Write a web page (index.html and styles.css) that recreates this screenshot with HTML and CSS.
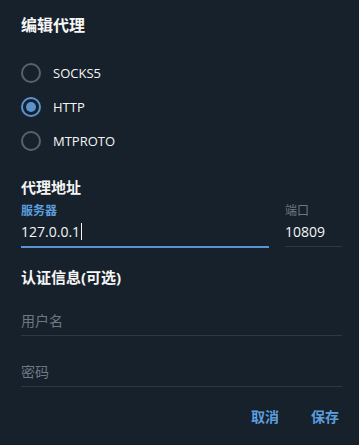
FILE: index.html
```html
<!DOCTYPE html>
<html>
<head>
  <meta charset="utf-8">
  <title>编辑代理</title>
  <link rel="stylesheet" href="styles.css">
</head>
<body>
  <div class="dialog">
    <h2 class="dialog-title">编辑代理</h2>

    <div class="radio-list">
      <label class="radio-row">
        <span class="radio"></span>
        <span class="radio-label">SOCKS5</span>
      </label>
      <label class="radio-row">
        <span class="radio checked"></span>
        <span class="radio-label">HTTP</span>
      </label>
      <label class="radio-row">
        <span class="radio"></span>
        <span class="radio-label">MTPROTO</span>
      </label>
    </div>

    <h3 class="section-title">代理地址</h3>
    <div class="address-row">
      <div class="field field-server active">
        <div class="field-label">服务器</div>
        <div class="field-input">127.0.0.1<span class="cursor"></span></div>
      </div>
      <div class="field field-port">
        <div class="field-label">端口</div>
        <div class="field-input">10809</div>
      </div>
    </div>

    <h3 class="section-title auth-title">认证信息(可选)</h3>
    <div class="field plain">
      <div class="field-input placeholder">用户名</div>
    </div>
    <div class="field plain">
      <div class="field-input placeholder">密码</div>
    </div>

    <div class="buttons">
      <span class="button">取消</span>
      <span class="button">保存</span>
    </div>
  </div>
</body>
</html>
```

FILE: styles.css
```css
body {
  margin: 0;
  background-color: #17212b;
  color: #f5f5f5;
  font-family: "Open Sans", "Noto Sans CJK SC", sans-serif;
}

.dialog {
  padding: 15px 17px 0 21px;
}

.dialog-title {
  margin: 0;
  font-size: 16px;
  line-height: 20px;
  font-weight: bold;
}

/* radio buttons */
.radio-list {
  margin-top: 21px;
}

.radio-row {
  display: flex;
  align-items: center;
  height: 34px;
}

.radio {
  box-sizing: border-box;
  width: 20px;
  height: 20px;
  border: 2px solid #56626e;
  border-radius: 50%;
  display: flex;
  align-items: center;
  justify-content: center;
}

.radio.checked {
  border-color: #5b93cf;
}

.radio.checked::after {
  content: "";
  width: 10px;
  height: 10px;
  border-radius: 50%;
  background-color: #5b93cf;
}

.radio-label {
  margin-left: 12px;
  font-size: 13px;
}

/* sections */
.section-title {
  margin: 19px 0 0;
  font-size: 15px;
  line-height: 20px;
  font-weight: bold;
}

.auth-title {
  margin-top: 19px;
}

.address-row {
  display: flex;
  gap: 16px;
  margin-top: 6px;
}

.field-server {
  flex: 1;
}

.field-port {
  width: 57px;
}

.field-label {
  font-size: 12px;
  line-height: 16px;
  color: #6d7883;
}

.active .field-label {
  color: #5b9ede;
  font-weight: bold;
}

.field-input {
  margin-top: 3px;
  font-size: 14px;
  line-height: 20px;
  padding-bottom: 4px;
  border-bottom: 1px solid #2c3843;
}

.active .field-input {
  border-bottom: 2px solid #5b93cf;
}

.cursor {
  display: inline-block;
  width: 1px;
  height: 17px;
  margin-left: 1px;
  vertical-align: -3px;
  background-color: #f5f5f5;
}

.plain {
  margin-top: 24px;
}

.plain + .plain {
  margin-top: 26px;
}

.placeholder {
  color: #6d7883;
}

/* dialog buttons */
.buttons {
  display: flex;
  justify-content: flex-end;
  gap: 32px;
  margin-top: 20px;
  padding-right: 3px;
}

.button {
  font-size: 14px;
  line-height: 20px;
  font-weight: bold;
  color: #5b9ede;
}
```
